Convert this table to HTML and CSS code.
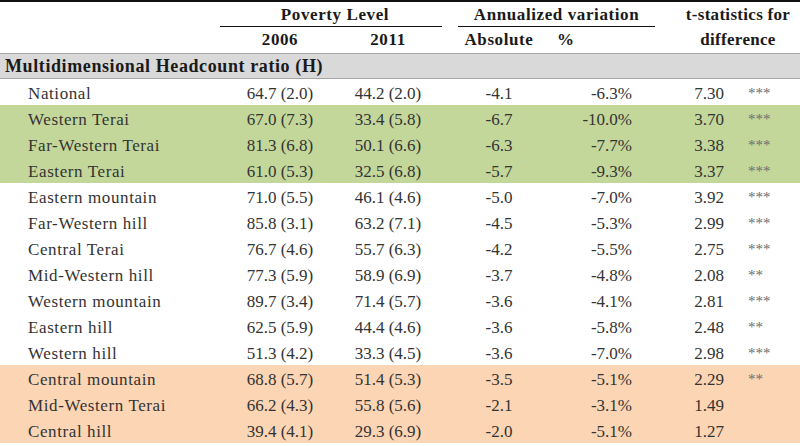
FILE: index.html
```html
<!DOCTYPE html>
<html>
<head>
<meta charset="utf-8">
<link rel="stylesheet" href="styles.css">
</head>
<body>
<table class="tbl">
  <colgroup>
    <col class="c-a"><col class="c-b"><col class="c-c"><col class="c-d"><col class="c-e"><col class="c-f"><col class="c-g">
  </colgroup>
  <thead>
    <tr class="h1">
      <th></th>
      <th colspan="2"><div class="grp grp-pov">Poverty Level</div></th>
      <th colspan="2"><div class="grp grp-ann">Annualized variation</div></th>
      <th colspan="2" class="tstat">t-statistics for</th>
    </tr>
    <tr class="h2">
      <th></th>
      <th class="ctr">2006</th>
      <th class="ctr c3">2011</th>
      <th class="ctr abs">Absolute</th>
      <th class="pct-h">%</th>
      <th colspan="2" class="tstat">difference</th>
    </tr>
  </thead>
  <tbody>
    <tr class="section"><td colspan="7">Multidimensional Headcount ratio (H)</td></tr>
    <tr><td class="lbl">National</td><td class="v2006">64.7 (2.0)</td><td class="v2011">44.2 (2.0)</td><td class="vabs">-4.1</td><td class="vpct">-6.3%</td><td class="vt">7.30</td><td class="vs">***</td></tr>
    <tr class="green"><td class="lbl">Western Terai</td><td class="v2006">67.0 (7.3)</td><td class="v2011">33.4 (5.8)</td><td class="vabs">-6.7</td><td class="vpct">-10.0%</td><td class="vt">3.70</td><td class="vs">***</td></tr>
    <tr class="green"><td class="lbl">Far-Western Terai</td><td class="v2006">81.3 (6.8)</td><td class="v2011">50.1 (6.6)</td><td class="vabs">-6.3</td><td class="vpct">-7.7%</td><td class="vt">3.38</td><td class="vs">***</td></tr>
    <tr class="green"><td class="lbl">Eastern Terai</td><td class="v2006">61.0 (5.3)</td><td class="v2011">32.5 (6.8)</td><td class="vabs">-5.7</td><td class="vpct">-9.3%</td><td class="vt">3.37</td><td class="vs">***</td></tr>
    <tr><td class="lbl">Eastern mountain</td><td class="v2006">71.0 (5.5)</td><td class="v2011">46.1 (4.6)</td><td class="vabs">-5.0</td><td class="vpct">-7.0%</td><td class="vt">3.92</td><td class="vs">***</td></tr>
    <tr><td class="lbl">Far-Western hill</td><td class="v2006">85.8 (3.1)</td><td class="v2011">63.2 (7.1)</td><td class="vabs">-4.5</td><td class="vpct">-5.3%</td><td class="vt">2.99</td><td class="vs">***</td></tr>
    <tr><td class="lbl">Central Terai</td><td class="v2006">76.7 (4.6)</td><td class="v2011">55.7 (6.3)</td><td class="vabs">-4.2</td><td class="vpct">-5.5%</td><td class="vt">2.75</td><td class="vs">***</td></tr>
    <tr><td class="lbl">Mid-Western hill</td><td class="v2006">77.3 (5.9)</td><td class="v2011">58.9 (6.9)</td><td class="vabs">-3.7</td><td class="vpct">-4.8%</td><td class="vt">2.08</td><td class="vs">**</td></tr>
    <tr><td class="lbl">Western mountain</td><td class="v2006">89.7 (3.4)</td><td class="v2011">71.4 (5.7)</td><td class="vabs">-3.6</td><td class="vpct">-4.1%</td><td class="vt">2.81</td><td class="vs">***</td></tr>
    <tr><td class="lbl">Eastern hill</td><td class="v2006">62.5 (5.9)</td><td class="v2011">44.4 (4.6)</td><td class="vabs">-3.6</td><td class="vpct">-5.8%</td><td class="vt">2.48</td><td class="vs">**</td></tr>
    <tr><td class="lbl">Western hill</td><td class="v2006">51.3 (4.2)</td><td class="v2011">33.3 (4.5)</td><td class="vabs">-3.6</td><td class="vpct">-7.0%</td><td class="vt">2.98</td><td class="vs">***</td></tr>
    <tr class="orange"><td class="lbl">Central mountain</td><td class="v2006">68.8 (5.7)</td><td class="v2011">51.4 (5.3)</td><td class="vabs">-3.5</td><td class="vpct">-5.1%</td><td class="vt">2.29</td><td class="vs">**</td></tr>
    <tr class="orange"><td class="lbl">Mid-Western Terai</td><td class="v2006">66.2 (4.3)</td><td class="v2011">55.8 (5.6)</td><td class="vabs">-2.1</td><td class="vpct">-3.1%</td><td class="vt">1.49</td><td class="vs"></td></tr>
    <tr class="orange"><td class="lbl">Central hill</td><td class="v2006">39.4 (4.1)</td><td class="v2011">29.3 (6.9)</td><td class="vabs">-2.0</td><td class="vpct">-5.1%</td><td class="vt">1.27</td><td class="vs"></td></tr>
  </tbody>
</table>
</body>
</html>
```

FILE: styles.css
```css
html, body {
  margin: 0;
  padding: 0;
  background: #ffffff;
}

.tbl {
  width: 800px;
  table-layout: fixed;
  border-collapse: collapse;
  font-family: "Liberation Serif", "Times New Roman", serif;
  font-size: 17px;
  color: #333333;
  border-top: 2px solid #111;
}

.c-a { width: 220px; }
.c-b { width: 120px; }
.c-c { width: 102px; }
.c-d { width: 98px; }
.c-e { width: 130px; }
.c-f { width: 60px; }
.c-g { width: 70px; }

.tbl th,
.tbl td {
  padding: 0;
  white-space: nowrap;
}

.tbl th {
  font-weight: bold;
  color: #1a1a1a;
  font-size: 17px;
  letter-spacing: 0.6px;
}

.tbl .h1 th {
  height: 25px;
  vertical-align: top;
  text-align: center;
}

.tbl .h1 th.tstat {
  vertical-align: middle;
}

.tbl .h2 th {
  height: 26px;
  vertical-align: middle;
}

.tbl .grp {
  border-bottom: 1px solid #111;
  height: 24px;
  line-height: 26px;
  text-align: center;
}

.tbl .grp-pov {
  padding-left: 8px;
}

.tbl .grp-ann {
  margin-left: 16px;
  margin-right: 15px;
}

.tbl .tstat {
  text-align: center;
  padding-left: 6px;
  letter-spacing: 0.3px;
}

.tbl .ctr { text-align: center; }
.tbl .c3 { padding-right: 6px; }
.tbl .abs { padding-left: 16px; }
.tbl .pct-h { text-align: left; padding-left: 17px; }

.tbl .section td {
  height: 23px;
  background: #d9d9d9;
  border-top: 1px solid #a6a6a6;
  border-bottom: 1px solid #a6a6a6;
  font-weight: bold;
  color: #1a1a1a;
  padding: 1px 0 0 5px;
  font-size: 18px;
  letter-spacing: 0.6px;
}

.tbl tbody tr td {
  height: 23px;
  padding-top: 3px;
  vertical-align: middle;
}

.tbl .lbl { padding-left: 28px; letter-spacing: 0.6px; }
.tbl .v2006 { text-align: center; }
.tbl .v2011 { text-align: center; padding-right: 6px; }
.tbl .vabs { text-align: center; padding-left: 16px; }
.tbl .vpct { text-align: right; padding-right: 38px; }
.tbl .vt { text-align: right; padding-right: 6px; }
.tbl .vs { text-align: left; padding-left: 18px; color: #6e6e6e; font-size: 15px; letter-spacing: 0; }

.tbl .green td { background: #c4d79b; }
.tbl .orange td { background: #fcd5b4; }
```
